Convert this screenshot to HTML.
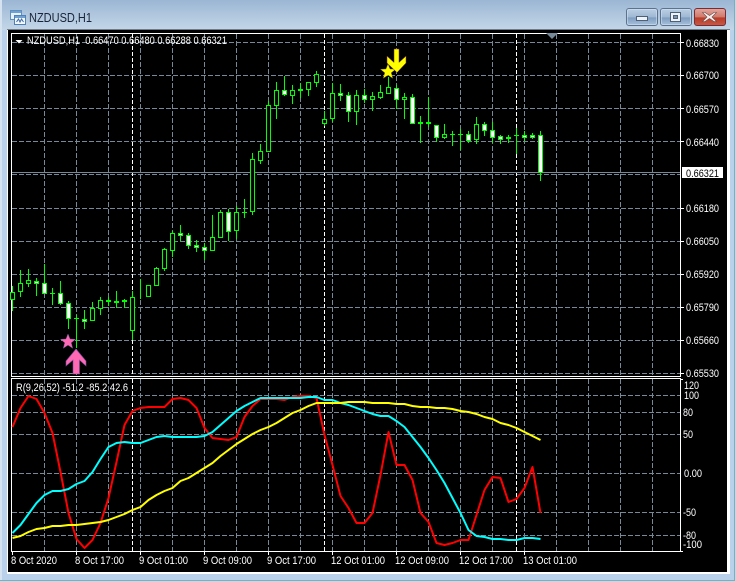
<!DOCTYPE html>
<html>
<head>
<meta charset="utf-8">
<title>NZDUSD,H1</title>
<style>
html,body{margin:0;padding:0;background:#b9d1ea;}
body{width:735px;height:581px;overflow:hidden;position:relative;font-family:"Liberation Sans",sans-serif;}
svg{position:absolute;left:0;top:0;display:block;}
text{font-family:"Liberation Sans",sans-serif;font-size:11px;fill:#fff;}
</style>
</head>
<body>
<svg width="735" height="581" viewBox="0 0 735 581" xmlns="http://www.w3.org/2000/svg">
<defs>
<linearGradient id="tb" x1="0" y1="0" x2="0" y2="1"><stop offset="0" stop-color="#9bb6d4"/><stop offset="1" stop-color="#c4d7e8"/></linearGradient>
<linearGradient id="btn" x1="0" y1="0" x2="0" y2="1"><stop offset="0" stop-color="#bcd0e4"/><stop offset=".5" stop-color="#9fb8d3"/><stop offset=".55" stop-color="#7f9dc0"/><stop offset="1" stop-color="#a8c2dc"/></linearGradient>
<linearGradient id="cls" x1="0" y1="0" x2="0" y2="1"><stop offset="0" stop-color="#e2a79f"/><stop offset=".5" stop-color="#d0796a"/><stop offset=".55" stop-color="#b93c27"/><stop offset="1" stop-color="#c65a46"/></linearGradient>
</defs>
<!-- window chrome -->
<rect width="735" height="581" fill="#b9d1ea"/>
<rect x="0" y="0" width="735" height="30" fill="url(#tb)"/>
<rect x="0" y="0" width="2" height="581" fill="#d5e2ef"/>
<rect x="734" y="0" width="1" height="581" fill="#40c8d8"/>
<rect x="0" y="580" width="735" height="1" fill="#40c8d8"/>
<!-- title icon -->
<rect x="10.500" y="10.500" width="11" height="9" fill="#e8f0f8" stroke="#5f8fc0"/>
<rect x="11" y="11" width="10" height="2" fill="#6fa0d0"/>
<rect x="14.500" y="15.500" width="11" height="9" fill="#f4f8fc" stroke="#4f80b8"/>
<rect x="15" y="16" width="10" height="2" fill="#6fa0d0"/>
<path d="M16.500 22l2-3 1.500 3 1.500-3 2 3" fill="none" stroke="#3a6aa8"/>
<text x="29" y="22" textLength="63" lengthAdjust="spacingAndGlyphs" style="font-size:13px;fill:#1a2438">NZDUSD,H1</text>
<!-- buttons -->
<rect x="626.500" y="8.500" width="31" height="17" rx="2.500" fill="url(#btn)" stroke="#5c7291"/>
<rect x="627.500" y="9.500" width="29" height="15" rx="1.500" fill="none" stroke="#d7e4f0" stroke-opacity=".55"/>
<rect x="636.500" y="16.500" width="11" height="4" fill="#eef3f8" stroke="#4e5f78"/>
<rect x="660.500" y="8.500" width="31" height="17" rx="2.500" fill="url(#btn)" stroke="#5c7291"/>
<rect x="661.500" y="9.500" width="29" height="15" rx="1.500" fill="none" stroke="#d7e4f0" stroke-opacity=".55"/>
<rect x="670.500" y="12.500" width="10" height="9" fill="#eef3f8" stroke="#4e5f78"/>
<rect x="673.500" y="15.500" width="4" height="3" fill="#7f94ad" stroke="#4e5f78"/>
<rect x="694.500" y="8.500" width="31" height="17" rx="2.500" fill="url(#cls)" stroke="#7a2c34"/>
<path d="M705 12.500l4.500 3 4.500-3h2.500l-4.500 4.500 4.500 4.500h-2.500l-4.500-3-4.500 3h-2.500l4.500-4.500-4.500-4.500z" fill="#f4f0ef" stroke="#6b4a4a" stroke-width=".6"/>
<!-- client area -->
<rect x="7" y="29" width="723" height="545" fill="#fff"/>
<rect x="7" y="29" width="723" height="1" fill="#6f7c8a"/>
<rect x="8" y="30" width="719" height="542" fill="#000"/>
<!-- grid -->
<path shape-rendering="crispEdges" fill="none" stroke="#778899" stroke-dasharray="5 2" d="M12 42.500H680M12 75.500H680M12 108.500H680M12 141.500H680M12 174.500H680M12 208.500H680M12 241.500H680M12 274.500H680M12 307.500H680M12 340.500H680M12 373.500H680M12 395.500H680M12 412.500H680M12 434.500H680M12 473.500H680M12 512.500H680M12 535.500H680M44.500 34V376M76.500 34V376M108.500 34V376M140.500 34V376M172.500 34V376M204.500 34V376M236.500 34V376M268.500 34V376M300.500 34V376M332.500 34V376M364.500 34V376M396.500 34V376M428.500 34V376M460.500 34V376M492.500 34V376M524.500 34V376M556.500 34V376M588.500 34V376M620.500 34V376M652.500 34V376M44.500 379V551M76.500 379V551M108.500 379V551M140.500 379V551M172.500 379V551M204.500 379V551M236.500 379V551M268.500 379V551M300.500 379V551M332.500 379V551M364.500 379V551M396.500 379V551M428.500 379V551M460.500 379V551M492.500 379V551M524.500 379V551M556.500 379V551M588.500 379V551M620.500 379V551M652.500 379V551"/>
<path shape-rendering="crispEdges" fill="none" stroke="#fff" stroke-dasharray="4 2" d="M132.500 34V376M324.500 34V376M516.500 34V376M132.500 379V551M324.500 379V551M516.500 379V551"/>
<path shape-rendering="crispEdges" fill="none" stroke="#778899" d="M12 172.500H681"/>
<!-- frames + ticks -->
<path shape-rendering="crispEdges" fill="none" stroke="#fff" d="M11.500 33.500H680.500V376.500H11.500zM11.500 378.500H680.500V551.500H11.500zM681 42.500h3M681 75.500h3M681 108.500h3M681 141.500h3M681 208.500h3M681 241.500h3M681 274.500h3M681 307.500h3M681 340.500h3M681 373.500h3M681 379.500h2M681 551.500h2M12.500 552v3M76.500 552v3M140.500 552v3M204.500 552v3M268.500 552v3M332.500 552v3M396.500 552v3M460.500 552v3M524.500 552v3"/>
<path d="M546 33h12l-6 6z" fill="#778899"/>
<path d="M15.500 40h7l-3.500 3.500z" fill="#fff"/>
<!-- candle wicks -->
<path shape-rendering="crispEdges" fill="none" stroke="#00ff00" d="M12.500 286V311M20.500 270V297M28.500 269V287M36.500 278V296M44.500 264V293M52.500 288V305M60.500 281V305M68.500 301V329M76.500 315V348M84.500 310V329M92.500 302V320M100.500 297V315M108.500 297V306M116.500 291V308M124.500 299V308M132.500 291V340M140.500 279V299M148.500 285V297M156.500 267V286M164.500 248V271M172.500 231V257M180.500 225V241M188.500 233V249M196.500 240V252M204.500 243V260M212.500 215V250M220.500 210V237M228.500 209V241M236.500 206V239M244.500 199V218M252.500 153V215M260.500 144V164M268.500 101V151M276.500 82V119M284.500 76V96M292.500 85V104M300.500 83V98M308.500 82V96M316.500 71V87M324.500 111V126M332.500 83V122M340.500 84V101M348.500 92V122M356.500 90V125M364.500 89V103M372.500 92V111M380.500 85V99M388.500 77V94M396.500 85V109M404.500 93V119M412.500 94V123M420.500 116V143M428.500 97V127M436.500 125V142M444.500 124V139M452.500 131V146M460.500 129V150M468.500 131V143M476.500 117V144M484.500 122V136M492.500 122V143M500.500 135V144M508.500 135V143M516.500 128V154M524.500 131V141M532.500 133V139M540.500 131V181M50 293.500h5M74 318.500h5M242 212.500h5M514 135.500h5M450 134.500h5M458 134.500h5"/>
<path shape-rendering="crispEdges" fill="none" stroke="#00ff00" stroke-width="2" d="M106 301h5M114 302h5M122 301h5M298 90h5M418 123h5M426 123h5M506 138h5"/>
<!-- hollow bodies -->
<path shape-rendering="crispEdges" fill="#000" stroke="#00ff00" d="M10.500 292.500h4V299.500h-4zM18.500 283.500h4V291.500h-4zM26.500 280.500h4V283.500h-4zM90.500 308.500h4V320.500h-4zM98.500 300.500h4V308.500h-4zM130.500 297.500h4V330.500h-4zM146.500 285.500h4V296.500h-4zM154.500 268.500h4V285.500h-4zM162.500 249.500h4V268.500h-4zM170.500 233.500h4V250.500h-4zM210.500 237.500h4V250.500h-4zM218.500 212.500h4V237.500h-4zM234.500 212.500h4V230.500h-4zM250.500 159.500h4V211.500h-4zM258.500 151.500h4V160.500h-4zM266.500 105.500h4V151.500h-4zM274.500 90.500h4V105.500h-4zM290.500 90.500h4V95.500h-4zM306.500 82.500h4V89.500h-4zM314.500 74.500h4V82.500h-4zM322.500 119.500h4V123.500h-4zM330.500 93.500h4V118.500h-4zM354.500 95.500h4V111.500h-4zM370.500 96.500h4V99.500h-4zM378.500 92.500h4V97.500h-4zM386.500 87.500h4V93.500h-4zM402.500 97.500h4V99.500h-4zM442.500 134.500h4V137.500h-4zM474.500 124.500h4V139.500h-4z"/>
<!-- filled bodies -->
<path shape-rendering="crispEdges" fill="#fff" stroke="#00ff00" d="M34.500 281.500h4V283.500h-4zM42.500 283.500h4V293.500h-4zM58.500 293.500h4V303.500h-4zM66.500 303.500h4V318.500h-4zM82.500 319.500h4V321.500h-4zM178.500 233.500h4V235.500h-4zM186.500 235.500h4V245.500h-4zM194.500 245.500h4V247.500h-4zM202.500 247.500h4V250.500h-4zM226.500 212.500h4V231.500h-4zM282.500 90.500h4V94.500h-4zM338.500 93.500h4V95.500h-4zM346.500 95.500h4V111.500h-4zM362.500 95.500h4V99.500h-4zM394.500 88.500h4V99.500h-4zM410.500 97.500h4V123.500h-4zM434.500 125.500h4V137.500h-4zM466.500 134.500h4V140.500h-4zM482.500 124.500h4V130.500h-4zM490.500 130.500h4V137.500h-4zM498.500 136.500h4V139.500h-4zM522.500 135.500h4V137.500h-4zM530.500 135.500h4V137.500h-4zM538.500 135.500h4V172.500h-4z"/>
<!-- markers -->
<path d="M68 334l2 5 5.500.3-4.300 3.500 1.500 5.400-4.700-3.100-4.700 3.100 1.500-5.400-4.300-3.500 5.500-.3z" fill="#ff69b4" stroke="#7a5aa0" stroke-width=".5"/>
<path d="M76 349l10 12v5l-6.500-6v14h-6.500v-14l-7 6v-5z" fill="#ff69b4" stroke="#7a4a9a" stroke-width=".6"/>
<path d="M388 64l2 5 5.500.3-4.300 3.500 1.500 5.400-4.700-3.100-4.700 3.100 1.500-5.400-4.300-3.500 5.500-.3z" fill="#ffff00" stroke="#8a7a10" stroke-width=".4"/>
<path d="M394 49h5v13.500l7-6.500v7l-9 9.500-10-9.500v-7l7 6.500z" fill="#ffff00" stroke="#7a3020" stroke-width=".5"/>
<!-- oscillator lines -->
<g fill="none" stroke-width="2" stroke-linejoin="round">
<polyline stroke="#ff0000" points="12.500,427 20.500,408 28.500,396 36.500,399 44.500,413 52.500,433 60.500,472 68.500,513 76.500,539 84.500,548 92.500,540 100.500,523 108.500,498 116.500,462 124.500,425 132.500,411 140.500,408 148.500,407 156.500,407 164.500,407 172.500,399 180.500,398 188.500,400 196.500,408 204.500,428 212.500,438 220.500,439 228.500,440 236.500,437 244.500,417 252.500,406 260.500,399 268.500,399 276.500,399 284.500,400 292.500,397 300.500,396 308.500,396 316.500,398 324.500,435 332.500,465 340.500,496 348.500,508 356.500,523 364.500,523 372.500,513 380.500,475 388.500,432 396.500,465 404.500,465 412.500,480 420.500,513 428.500,522 436.500,543 444.500,545 452.500,543 460.500,540 468.500,540 476.500,515 484.500,490 492.500,477 500.500,478 508.500,502 516.500,499 524.500,488 532.500,467 540.500,513"/>
<polyline stroke="#00ffff" points="12.500,533 20.500,525 28.500,514 36.500,503 44.500,495 52.500,491 60.500,491 68.500,489 76.500,484 84.500,481 92.500,472 100.500,459 108.500,447 116.500,443 124.500,442 132.500,443 140.500,443 148.500,440 156.500,437 164.500,436 172.500,437 180.500,437 188.500,437 196.500,437 204.500,436 212.500,432 220.500,425 228.500,418 236.500,411 244.500,406 252.500,402 260.500,398 268.500,398 276.500,398 284.500,398 292.500,398 300.500,398 308.500,397 316.500,397 324.500,400 332.500,400 340.500,403 348.500,405 356.500,408 364.500,411 372.500,414 380.500,416 388.500,416 396.500,421 404.500,427 412.500,437 420.500,447 428.500,458 436.500,470 444.500,483 452.500,498 460.500,513 468.500,530 476.500,536 484.500,537 492.500,539 500.500,539 508.500,540 516.500,540 524.500,538 532.500,538 540.500,539"/>
<polyline stroke="#ffff00" points="12.500,538 20.500,536 28.500,532 36.500,529 44.500,528 52.500,526 60.500,526 68.500,525 76.500,525 84.500,524 92.500,523 100.500,522 108.500,520 116.500,517 124.500,514 132.500,510 140.500,507 148.500,500 156.500,495 164.500,491 172.500,488 180.500,481 188.500,478 196.500,473 204.500,468 212.500,463 220.500,456 228.500,450 236.500,444 244.500,439 252.500,434 260.500,430 268.500,427 276.500,423 284.500,418 292.500,413 300.500,410 308.500,406 316.500,403 324.500,403 332.500,403 340.500,403 348.500,402 356.500,402 364.500,402 372.500,403 380.500,403 388.500,403 396.500,404 404.500,404 412.500,406 420.500,407 428.500,407 436.500,408 444.500,408 452.500,409 460.500,411 468.500,412 476.500,414 484.500,417 492.500,419 500.500,423 508.500,425 516.500,428 524.500,432 532.500,436 540.500,440"/>
</g>
<!-- chart text -->
<text x="27" y="44" textLength="200" lengthAdjust="spacingAndGlyphs" xml:space="preserve">NZDUSD,H1  0.66470 0.66480 0.66288 0.66321</text>
<text x="16" y="391" textLength="112" lengthAdjust="spacingAndGlyphs">R(9,26,52) -51.2 -85.2 42.6</text>
<g>
<text x="686" y="47" textLength="33" lengthAdjust="spacingAndGlyphs">0.66830</text>
<text x="686" y="79" textLength="33" lengthAdjust="spacingAndGlyphs">0.66700</text>
<text x="686" y="113" textLength="33" lengthAdjust="spacingAndGlyphs">0.66570</text>
<text x="686" y="146" textLength="33" lengthAdjust="spacingAndGlyphs">0.66440</text>
<text x="686" y="212" textLength="33" lengthAdjust="spacingAndGlyphs">0.66180</text>
<text x="686" y="245" textLength="33" lengthAdjust="spacingAndGlyphs">0.66050</text>
<text x="686" y="278" textLength="33" lengthAdjust="spacingAndGlyphs">0.65920</text>
<text x="686" y="311" textLength="33" lengthAdjust="spacingAndGlyphs">0.65790</text>
<text x="686" y="344" textLength="33" lengthAdjust="spacingAndGlyphs">0.65660</text>
<text x="686" y="377" textLength="33" lengthAdjust="spacingAndGlyphs">0.65530</text>
<rect x="682" y="167" width="41" height="11" fill="#fff"/>
<text x="686" y="177" textLength="33" lengthAdjust="spacingAndGlyphs" style="fill:#000">0.66321</text>
<text x="684" y="389" textLength="15" lengthAdjust="spacingAndGlyphs">120</text>
<text x="684" y="399" textLength="15" lengthAdjust="spacingAndGlyphs">100</text>
<text x="683" y="416" textLength="10" lengthAdjust="spacingAndGlyphs">80</text>
<text x="683" y="438" textLength="10" lengthAdjust="spacingAndGlyphs">50</text>
<text x="684" y="477" textLength="18" lengthAdjust="spacingAndGlyphs">0.00</text>
<text x="683" y="516" textLength="13" lengthAdjust="spacingAndGlyphs">-50</text>
<text x="683" y="539" textLength="13" lengthAdjust="spacingAndGlyphs">-80</text>
<text x="683" y="548" textLength="19" lengthAdjust="spacingAndGlyphs">-100</text>
<text x="11" y="564" textLength="46" lengthAdjust="spacingAndGlyphs">8 Oct 2020</text>
<text x="75" y="564" textLength="49" lengthAdjust="spacingAndGlyphs">8 Oct 17:00</text>
<text x="139" y="564" textLength="49" lengthAdjust="spacingAndGlyphs">9 Oct 01:00</text>
<text x="203" y="564" textLength="49" lengthAdjust="spacingAndGlyphs">9 Oct 09:00</text>
<text x="267" y="564" textLength="49" lengthAdjust="spacingAndGlyphs">9 Oct 17:00</text>
<text x="331" y="564" textLength="54" lengthAdjust="spacingAndGlyphs">12 Oct 01:00</text>
<text x="395" y="564" textLength="54" lengthAdjust="spacingAndGlyphs">12 Oct 09:00</text>
<text x="459" y="564" textLength="54" lengthAdjust="spacingAndGlyphs">12 Oct 17:00</text>
<text x="523" y="564" textLength="54" lengthAdjust="spacingAndGlyphs">13 Oct 01:00</text>
</g>
</svg>
</body>
</html>
